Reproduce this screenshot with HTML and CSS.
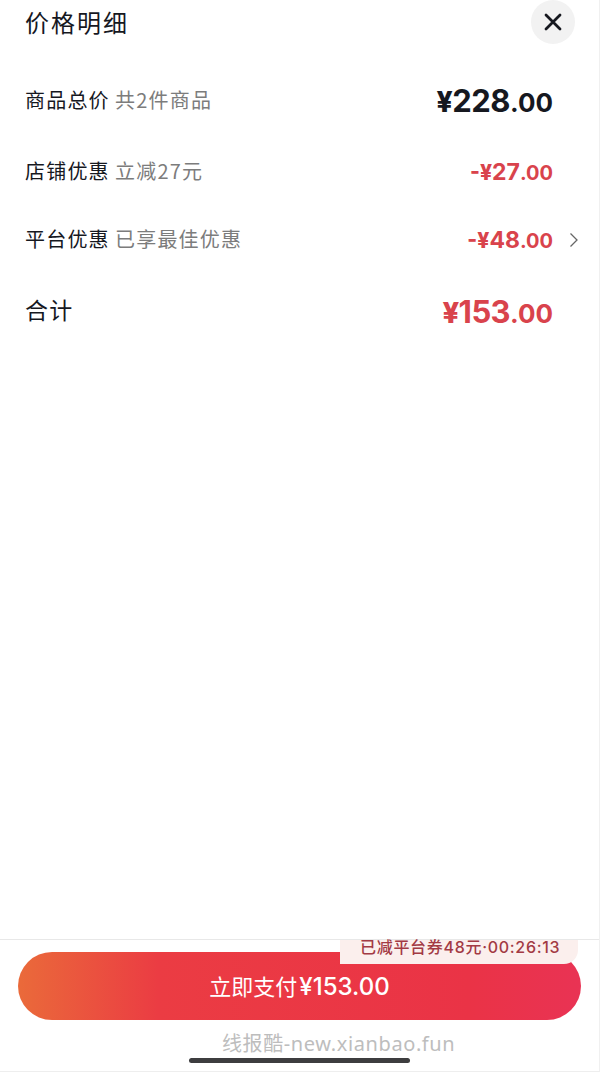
FILE: index.html
```html
<!DOCTYPE html>
<html lang="zh-CN">
<head>
    <meta charset="UTF-8">
    <meta name="viewport" content="width=device-width, initial-scale=1.0">
    <title>价格明细</title>
    <link rel="stylesheet" href="styles.css">
</head>
<body>
    <div class="sheet">
        <div class="sheet-header">
            <h2 class="sheet-title">价格明细</h2>
            <button class="close-btn" aria-label="关闭">
                <svg width="18" height="18" viewBox="0 0 18 18">
                    <path d="M2 2 L16 16 M16 2 L2 16" stroke="#16181f" stroke-width="2.8" stroke-linecap="round" fill="none"/>
                </svg>
            </button>
        </div>

        <ul class="price-list">
            <li class="price-row row-goods">
                <span class="row-label">商品总价</span>
                <span class="row-note">共2件商品</span>
                <span class="amount amount-big"><i>¥</i>228<small>.00</small></span>
            </li>
            <li class="price-row row-shop">
                <span class="row-label">店铺优惠</span>
                <span class="row-note">立减27元</span>
                <span class="amount amount-red"><i>-¥</i>27<small>.00</small></span>
            </li>
            <li class="price-row row-platform">
                <span class="row-label">平台优惠</span>
                <span class="row-note">已享最佳优惠</span>
                <span class="amount amount-red"><i>-¥</i>48<small>.00</small></span>
                <svg class="chevron" width="10" height="16" viewBox="0 0 10 16">
                    <path d="M1.5 1.5 L8 8 L1.5 14.5" stroke="#666" stroke-width="1.3" fill="none"/>
                </svg>
            </li>
            <li class="price-row row-total">
                <span class="row-label total-label">合计</span>
                <span class="amount amount-total"><i>¥</i>153<small>.00</small></span>
            </li>
        </ul>

        <div class="pay-bar">
            <div class="coupon-tag">已减平台券48元·00:26:13</div>
            <button class="pay-btn">立即支付<span class="pay-price">¥153.00</span></button>
            <div class="watermark">线报酷-new.xianbao.fun</div>
            <div class="home-bar"></div>
        </div>
    </div>
</body>
</html>
```

FILE: styles.css
```css
* {
    box-sizing: border-box;
}

body {
    margin: 0;
    background: #fff;
    font-family: "Noto Sans CJK SC", "Inter", sans-serif;
    color: #16181f;
}

.sheet {
    height: 1072px;
    display: flex;
    flex-direction: column;
    overflow: hidden;
    border-bottom: 1px solid #eee;
    border-right: 1px solid #f0f0f0;
}

.sheet-header {
    display: flex;
    justify-content: space-between;
    align-items: flex-start;
    padding: 0 24px 0 25px;
    height: 44px;
}

.sheet-title {
    margin: 0;
    font-size: 24px;
    line-height: 43px;
    font-weight: 400;
    letter-spacing: 2px;
}

.close-btn {
    width: 44px;
    height: 44px;
    border: none;
    border-radius: 50%;
    background: #f2f2f2;
    display: flex;
    align-items: center;
    justify-content: center;
    padding: 0;
}

.price-list {
    list-style-type: none;
    margin: 0;
    padding: 0 46px 0 25px;
    flex: 1;
}

.price-row {
    display: flex;
    align-items: center;
    position: relative;
    height: 46px;
}

.row-goods {
    margin-top: 32px;
}

.row-shop {
    margin-top: 25px;
}

.row-platform {
    margin-top: 22px;
}

.row-total {
    margin-top: 26px;
}

.row-label {
    font-size: 20px;
    letter-spacing: 1.2px;
    width: 90px;
}

.total-label {
    font-size: 23px;
    margin-top: -2px;
}

.row-note {
    font-size: 20px;
    color: #7c7c7c;
    letter-spacing: 1.2px;
}

.amount {
    margin-left: auto;
    font-family: "Inter", sans-serif;
    font-weight: 700;
    line-height: 1;
}

.amount i {
    font-style: normal;
    font-weight: 800;
}

.amount-big {
    font-size: 31px;
    letter-spacing: -0.5px;
    margin-top: 2px;
}

.amount-big i {
    font-size: 28px;
}

.amount-big small {
    font-size: 26px;
    font-weight: 700;
    letter-spacing: 0;
}

.amount-red {
    font-size: 23px;
    color: #d9434c;
    margin-top: 4px;
}

.amount-red i {
    font-size: 21px;
}

.amount-red small {
    font-size: 20px;
    font-weight: 700;
}

.amount-total {
    font-size: 31px;
    color: #d9434c;
    letter-spacing: -0.6px;
    margin-top: 3px;
}

.amount-total i {
    font-size: 29px;
}

.amount-total small {
    font-size: 26px;
    font-weight: 700;
    letter-spacing: 0;
}

.chevron {
    position: absolute;
    right: -26px;
    top: 17px;
}

.pay-bar {
    position: relative;
    height: 132px;
    border-top: 1px solid #e8e8e8;
    padding: 12px 18px 0;
}

.coupon-tag {
    position: absolute;
    top: 0;
    right: 21px;
    width: 238px;
    height: 24px;
    background: #fbefed;
    color: #a33a44;
    border-radius: 0 0 14px 0;
    font-family: "Inter", "Noto Sans CJK SC", sans-serif;
    font-size: 16px;
    font-weight: 500;
    letter-spacing: 0.7px;
    line-height: 14px;
    padding: 0 0 0 20px;
    white-space: nowrap;
    z-index: 1;
}

.pay-btn {
    display: block;
    width: 563px;
    height: 68px;
    border: none;
    border-radius: 34px;
    background: linear-gradient(90deg, #ea6a3a 0%, #eb3c43 25%, #ea3346 80%, #e93354 100%);
    color: #fff;
    font-family: inherit;
    font-size: 22px;
    padding: 0 0 2px;
}

.pay-price {
    font-family: "Inter", sans-serif;
    font-size: 24px;
    font-weight: 500;
    margin-left: 2px;
}

.watermark {
    margin-top: 10px;
    margin-left: 204px;
    font-family: "Noto Sans", "Noto Sans CJK SC", sans-serif;
    font-size: 20px;
    letter-spacing: 0.6px;
    color: #bdbdbd;
    line-height: 28px;
    white-space: nowrap;
}

.home-bar {
    position: absolute;
    left: 189px;
    top: 118px;
    width: 221px;
    height: 5px;
    border-radius: 3px;
    background: #3d3d3f;
}
```
